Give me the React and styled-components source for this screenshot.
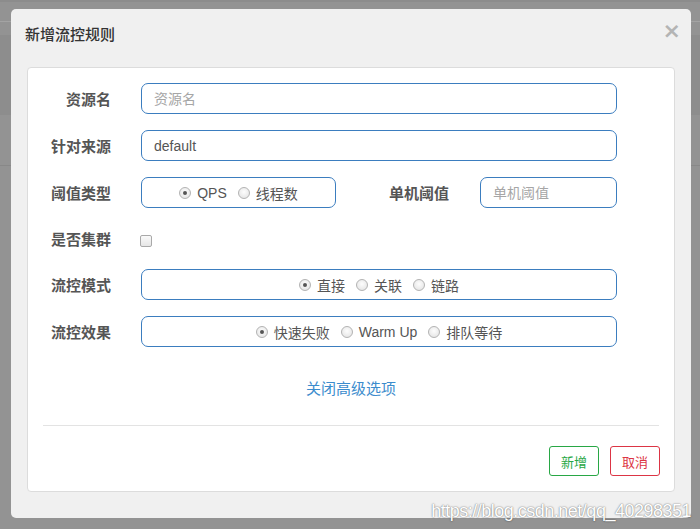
import React from 'react'
import styled, { createGlobalStyle } from 'styled-components'

const GlobalStyle = createGlobalStyle`
  html, body {
    margin: 0;
    padding: 0;
  }
  body {
    width: 700px;
    height: 529px;
    overflow: hidden;
    font-family: "Liberation Sans", "Noto Sans CJK SC", sans-serif;
    background:
      linear-gradient(to bottom,
        #8c8c8c 0, #8c8c8c 2px,
        #939393 2px, #939393 21px,
        #a3a3a3 21px, #a3a3a3 22px,
        #939393 22px, #939393 35px,
        #8d8d8d 35px, #8d8d8d 115px,
        #939393 115px, #939393 165px,
        #888 165px, #888 166px,
        #939393 166px);
  }
`

export default function App() {
  return (
    <>
      <GlobalStyle />
      <Backdrop>
        <Modal>
          <Header>
            <Title>新增流控规则</Title>
            <Close>×</Close>
          </Header>

          <Card>
            <Row>
              <Label>资源名</Label>
              <Input placeholder="资源名" />
            </Row>
            <Row>
              <Label>针对来源</Label>
              <Input defaultValue="default" />
            </Row>
            <Row>
              <Label>阈值类型</Label>
              <RadioBox width="195px">
                <Radio checked label="QPS" />
                <Radio label="线程数" />
              </RadioBox>
              <SubLabel>单机阈值</SubLabel>
              <Input placeholder="单机阈值" />
            </Row>
            <Row short>
              <Label>是否集群</Label>
              <Checkbox />
            </Row>
            <Row>
              <Label>流控模式</Label>
              <RadioBox>
                <Radio checked label="直接" />
                <Radio label="关联" />
                <Radio label="链路" />
              </RadioBox>
            </Row>
            <Row>
              <Label>流控效果</Label>
              <RadioBox>
                <Radio checked label="快速失败" />
                <Radio label="Warm Up" />
                <Radio label="排队等待" />
              </RadioBox>
            </Row>

            <LinkRow>
              <Link>关闭高级选项</Link>
            </LinkRow>

            <Divider />

            <Footer>
              <Button color="#28a745">新增</Button>
              <Button color="#dc3545">取消</Button>
            </Footer>
          </Card>
        </Modal>
        <Watermark>https://blog.csdn.net/qq_40298351</Watermark>
      </Backdrop>
    </>
  )
}

function Radio({ checked, label }) {
  return (
    <RadioItem>
      <RadioDot checked={checked} />
      <span>{label}</span>
    </RadioItem>
  )
}

const Backdrop = styled.div`
  position: relative;
  width: 700px;
  height: 529px;
  padding: 9px 9px 0 11px;
  box-sizing: border-box;
`

const Modal = styled.div`
  width: 680px;
  height: 509px;
  background: #f0f0f0;
  border-radius: 5px;
  box-sizing: border-box;
  padding: 0 16px 0 16px;
  display: flex;
  flex-direction: column;
`

const Header = styled.div`
  height: 58px;
  box-sizing: border-box;
  display: flex;
  align-items: flex-start;
  justify-content: space-between;
  padding-top: 14px;
`

const Title = styled.div`
  font-family: "Noto Sans CJK SC", sans-serif;
  font-size: 15px;
  line-height: 22px;
  font-weight: 500;
  color: #333;
  margin-left: -2px;
`

const Close = styled.div`
  font-family: "DejaVu Sans", sans-serif;
  font-size: 22px;
  font-weight: bold;
  color: #b4b4b4;
  margin-right: -6px;
  margin-top: -3px;
  line-height: 1;
`

const Card = styled.div`
  background: #fff;
  border: 1px solid #dcdcdc;
  border-radius: 4px;
  box-sizing: border-box;
  height: 425px;
  padding: 15px 57px 0 0;
  display: flex;
  flex-direction: column;
`

const Row = styled.div`
  display: flex;
  align-items: center;
  height: ${p => (p.short ? '29px' : '31px')};
  margin-bottom: 16px;
`

const Label = styled.div`
  width: 83px;
  flex: none;
  margin-right: 30px;
  text-align: right;
  font-family: "Noto Sans CJK SC", sans-serif;
  font-size: 15px;
  font-weight: bold;
  color: #555;
`

const SubLabel = styled(Label)`
  width: 113px;
  margin-right: 31px;
`

const Input = styled.input`
  flex: 1;
  min-width: 0;
  height: 31px;
  box-sizing: border-box;
  border: 1px solid #3b7dbf;
  border-radius: 7px;
  padding: 0 12px;
  font-family: "Liberation Sans", "Noto Sans CJK SC", sans-serif;
  font-size: 14px;
  color: #555;
  outline: none;

  &::placeholder {
    color: #a6a6a6;
  }
`

const RadioBox = styled.div`
  flex: ${p => (p.width ? 'none' : '1')};
  width: ${p => p.width || 'auto'};
  height: 31px;
  box-sizing: border-box;
  border: 1px solid #3b7dbf;
  border-radius: 7px;
  display: flex;
  align-items: center;
  justify-content: center;
  gap: 11px;
  padding-top: 1px;
`

const RadioItem = styled.label`
  display: flex;
  align-items: center;
  gap: 6px;
  font-family: "Liberation Sans", "Noto Sans CJK SC", sans-serif;
  font-size: 14px;
  color: #555;
`

const RadioDot = styled.span`
  width: 12px;
  height: 12px;
  border-radius: 50%;
  box-sizing: border-box;
  border: 1px solid #b3b3b3;
  background: radial-gradient(circle at 50% 40%, #fdfdfd 0%, #e0e0e0 100%);
  position: relative;

  &::after {
    content: '';
    display: ${p => (p.checked ? 'block' : 'none')};
    position: absolute;
    left: 3px;
    top: 3px;
    width: 4px;
    height: 4px;
    border-radius: 50%;
    background: #555;
  }
`

const Checkbox = styled.span`
  width: 12px;
  height: 12px;
  box-sizing: border-box;
  border: 1px solid #a9a9a9;
  border-radius: 2px;
  background: linear-gradient(#fafafa, #e6e6e6);
  margin-left: -1px;
  margin-top: 4px;
`

const LinkRow = styled.div`
  display: flex;
  justify-content: center;
  padding-left: 57px;
  margin-top: 14px;
  height: 48px;
`

const Link = styled.a`
  font-family: "Noto Sans CJK SC", sans-serif;
  font-size: 15px;
  color: #3c8ccd;
  cursor: pointer;
`

const Divider = styled.div`
  height: 1px;
  background: #e3e3e3;
  margin: 0 -42px 0 15px;
`

const Footer = styled.div`
  display: flex;
  justify-content: flex-end;
  gap: 11px;
  margin-right: -43px;
  margin-top: 20px;
`

const Button = styled.button`
  width: 50px;
  height: 30px;
  box-sizing: border-box;
  background: #fff;
  border: 1px solid ${p => p.color};
  color: ${p => p.color};
  border-radius: 3px;
  font-family: "Noto Sans CJK SC", sans-serif;
  font-size: 13px;
  padding: 0;
`

const Watermark = styled.div`
  position: absolute;
  right: 9px;
  bottom: 7px;
  font-family: "Liberation Sans", sans-serif;
  font-size: 18px;
  letter-spacing: -0.5px;
  color: #fff;
  text-shadow: 0 0 2px rgba(0, 0, 0, 0.45), 0 0 1px rgba(0, 0, 0, 0.3);
  pointer-events: none;
`
